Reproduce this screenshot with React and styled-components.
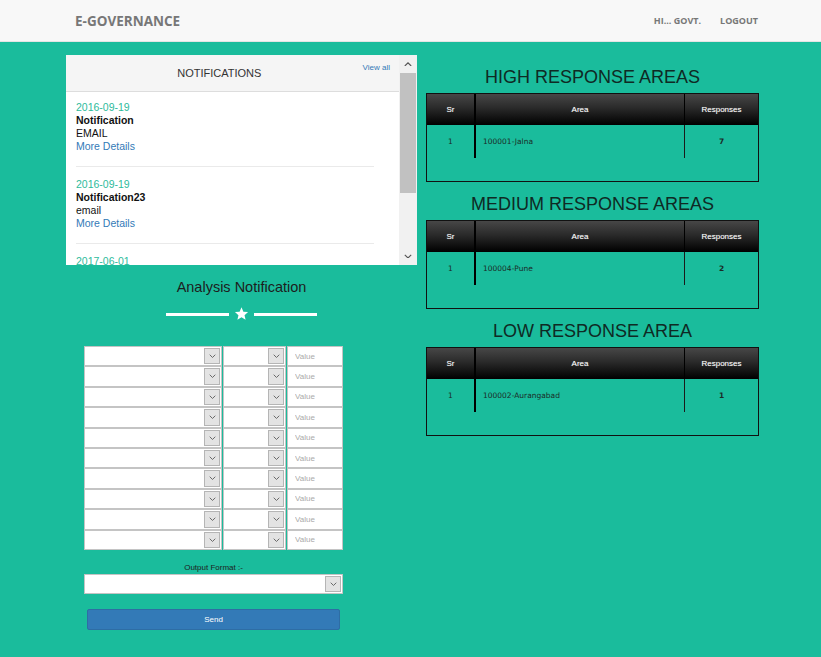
import React from "react";
import styled, { createGlobalStyle } from "styled-components";

const GlobalStyle = createGlobalStyle`
  html, body { margin: 0; padding: 0; }
  body {
    background: #1abc9c;
    font-family: "Liberation Sans", Arial, sans-serif;
    color: #333;
  }
  * { box-sizing: border-box; }
`;

const Navbar = styled.header`
  height: 42px;
  background: #f8f8f8;
  border-bottom: 1px solid #e4e4e4;
  display: flex;
  align-items: center;
  justify-content: space-between;
  padding: 0 63px 0 75px;
`;

const Brand = styled.div`
  font-family: "Open Sans", sans-serif;
  font-weight: 700;
  font-size: 13.5px;
  color: #777;
`;

const NavLinks = styled.nav`
  display: flex;
  gap: 19px;
  font-family: "Open Sans", sans-serif;
  font-weight: 700;
  font-size: 9px;
  color: #777;
`;

const Main = styled.main`
  display: flex;
  gap: 9px;
  padding: 13px 0 0 66px;
`;

const LeftCol = styled.section`
  width: 351px;
  display: flex;
  flex-direction: column;
`;

const RightCol = styled.section`
  width: 333px;
  display: flex;
  flex-direction: column;
`;

const Panel = styled.div`
  height: 210px;
  background: #fff;
  display: flex;
  overflow: hidden;
`;

const PanelBody = styled.div`
  flex: 1;
  overflow: hidden;
`;

const PanelHeader = styled.div`
  height: 37px;
  background: #f5f5f5;
  border-bottom: 1px solid #ddd;
  display: flex;
  align-items: center;
  padding-left: 10px;
`;

const PanelTitle = styled.div`
  flex: 1;
  text-align: center;
  font-size: 11px;
  color: #333;
`;

const ViewAll = styled.a`
  align-self: flex-start;
  margin: 8px 9px 0 0;
  font-size: 8px;
  color: #337ab7;
  text-decoration: none;
`;

const NoteList = styled.div`
  padding: 9px 25px 0 10px;
`;

const NoteItem = styled.div`
  font-size: 10.5px;
  line-height: 13px;
  padding-bottom: 13px;
  margin-bottom: 11px;
  border-bottom: 1px solid #eaeaea;
`;

const NoteDate = styled.div`
  color: #2dbb9c;
`;

const NoteTitle = styled.div`
  color: #111;
  font-weight: 700;
`;

const NoteBody = styled.div`
  color: #111;
`;

const NoteLink = styled.a`
  display: block;
  color: #337ab7;
  text-decoration: none;
`;

const ScrollTrack = styled.div`
  width: 18px;
  background: #f1f1f1;
  display: flex;
  flex-direction: column;
`;

const ScrollBtn = styled.div`
  height: 18px;
  display: flex;
  align-items: center;
  justify-content: center;
`;

const ScrollThumb = styled.div`
  height: 120px;
  margin: 0 1px;
  background: #c1c1c1;
`;

const ScrollSpace = styled.div`
  flex: 1;
`;

const SectionTitle = styled.h2`
  margin: 14px 0 0;
  font-weight: 400;
  font-size: 14.5px;
  line-height: 17px;
  text-align: center;
  color: #1d1d1d;
`;

const Divider = styled.div`
  margin-top: 11px;
  height: 14px;
  display: flex;
  align-items: center;
  justify-content: center;
  gap: 5px;
`;

const DividerLine = styled.span`
  width: 63px;
  height: 3px;
  background: #fff;
`;

const Form = styled.form`
  width: 259px;
  margin: 25px 0 0 18px;
  display: flex;
  flex-direction: column;
`;

const Row = styled.div`
  display: flex;
  gap: 1px;
  height: 20.4px;
`;

const SelectBox = styled.div`
  width: ${(p) => p.$w};
  height: 100%;
  background: #fff;
  border: 1px solid #c4c4c4;
  display: flex;
  justify-content: flex-end;
  padding: 1px;
`;

const ArrowBox = styled.div`
  width: 16px;
  height: 100%;
  background: #e3e3e3;
  border: 1px solid #b5b5b5;
  display: flex;
  align-items: center;
  justify-content: center;
`;

const ValueInput = styled.input`
  width: 56px;
  height: 100%;
  border: 1px solid #c4c4c4;
  background: #fff;
  padding: 0 0 0 7px;
  font-family: "Liberation Sans", Arial, sans-serif;
  font-size: 8px;
  outline: none;
  &::placeholder { color: #aaa; }
`;

const OutputLabel = styled.label`
  margin-top: 13px;
  height: 10px;
  line-height: 10px;
  font-size: 8px;
  text-align: center;
  color: #1d1d1d;
`;

const OutputRow = styled.div`
  margin-top: 1px;
  height: 20px;
  display: flex;
`;

const SendButton = styled.button`
  margin: 15px 3px 0;
  height: 21px;
  background: #337ab7;
  border: 1px solid #2e6da4;
  border-radius: 2px;
  color: #fff;
  font-family: "Liberation Sans", Arial, sans-serif;
  font-size: 8px;
`;

const AreaTitle = styled.h2`
  margin: 11px 0 5px;
  font-weight: 400;
  font-size: 18px;
  line-height: 22px;
  text-align: center;
  color: #0f2a24;
`;

const TableBox = styled.div`
  height: 89px;
  border: 1px solid #111;
`;

const TRow = styled.div`
  display: grid;
  grid-template-columns: 47px 210px 1fr;
  height: ${(p) => (p.$head ? "31px" : "33px")};
  background: ${(p) => (p.$head ? "linear-gradient(#474747, #2a2a2a 45%, #000)" : "transparent")};
`;

const TCell = styled.div`
  display: flex;
  align-items: center;
  justify-content: ${(p) => (p.$left ? "flex-start" : "center")};
  padding-left: ${(p) => (p.$left ? "7px" : "0")};
  border-left: ${(p) => p.$div || "none"};
  font-family: ${(p) => (p.$head ? '"Liberation Sans", Arial' : '"DejaVu Sans"')}, sans-serif;
  font-size: ${(p) => (p.$head ? "8px" : "7.5px")};
  font-weight: ${(p) => (p.$bold ? 700 : 400)};
  color: ${(p) => (p.$head ? "#fff" : "#1b2b27")};
  text-shadow: ${(p) => (p.$head ? "0 0 1px rgba(255,255,255,0.4)" : "none")};
`;

const Chevron = ({ up, size = 7, color = "#666" }) => (
  <svg width={size} height={size * 0.6} viewBox="0 0 10 6">
    <polyline
      points={up ? "1,5 5,1 9,5" : "1,1 5,5 9,1"}
      fill="none"
      stroke={color}
      strokeWidth="1.4"
    />
  </svg>
);

const Star = () => (
  <svg width="15" height="14" viewBox="0 0 24 23">
    <polygon
      fill="#fff"
      points="12,0.5 15.1,7.6 22.8,8.3 17,13.4 18.7,21 12,17 5.3,21 7,13.4 1.2,8.3 8.9,7.6"
    />
  </svg>
);

const notes = [
  { date: "2016-09-19", title: "Notification", body: "EMAIL" },
  { date: "2016-09-19", title: "Notification23", body: "email" },
  { date: "2017-06-01" },
];

const areas = [
  { title: "HIGH RESPONSE AREAS", area: "100001-Jalna", count: 7 },
  { title: "MEDIUM RESPONSE AREAS", area: "100004-Pune", count: 2 },
  { title: "LOW RESPONSE AREA", area: "100002-Aurangabad", count: 1 },
];

const Select = ({ w }) => (
  <SelectBox $w={w}>
    <ArrowBox>
      <Chevron />
    </ArrowBox>
  </SelectBox>
);

export default function App() {
  return (
    <>
      <GlobalStyle />
      <Navbar>
        <Brand>E-GOVERNANCE</Brand>
        <NavLinks>
          <span>HI... GOVT.</span>
          <span>LOGOUT</span>
        </NavLinks>
      </Navbar>
      <Main>
        <LeftCol>
          <Panel>
            <PanelBody>
              <PanelHeader>
                <PanelTitle>NOTIFICATIONS</PanelTitle>
                <ViewAll>View all</ViewAll>
              </PanelHeader>
              <NoteList>
                {notes.map((n, i) => (
                  <NoteItem key={i}>
                    <NoteDate>{n.date}</NoteDate>
                    {n.title && <NoteTitle>{n.title}</NoteTitle>}
                    {n.body && <NoteBody>{n.body}</NoteBody>}
                    {n.title && <NoteLink>More Details</NoteLink>}
                  </NoteItem>
                ))}
              </NoteList>
            </PanelBody>
            <ScrollTrack>
              <ScrollBtn>
                <Chevron up size={8} color="#555" />
              </ScrollBtn>
              <ScrollThumb />
              <ScrollSpace />
              <ScrollBtn>
                <Chevron size={8} color="#555" />
              </ScrollBtn>
            </ScrollTrack>
          </Panel>
          <SectionTitle>Analysis Notification</SectionTitle>
          <Divider>
            <DividerLine />
            <Star />
            <DividerLine />
          </Divider>
          <Form>
            {Array.from({ length: 10 }).map((_, i) => (
              <Row key={i}>
                <Select w="138px" />
                <Select w="63px" />
                <ValueInput placeholder="Value" />
              </Row>
            ))}
            <OutputLabel>Output Format :-</OutputLabel>
            <OutputRow>
              <Select w="259px" />
            </OutputRow>
            <SendButton type="button">Send</SendButton>
          </Form>
        </LeftCol>
        <RightCol>
          {areas.map((a) => (
            <div key={a.title}>
              <AreaTitle>{a.title}</AreaTitle>
              <TableBox>
                <TRow $head>
                  <TCell $head>Sr</TCell>
                  <TCell $head $div="2px solid #000">Area</TCell>
                  <TCell $head $div="1px solid #000">Responses</TCell>
                </TRow>
                <TRow>
                  <TCell>1</TCell>
                  <TCell $left $div="2px solid #000">{a.area}</TCell>
                  <TCell $bold $div="1px solid #1a1a1a">{a.count}</TCell>
                </TRow>
              </TableBox>
            </div>
          ))}
        </RightCol>
      </Main>
    </>
  );
}
